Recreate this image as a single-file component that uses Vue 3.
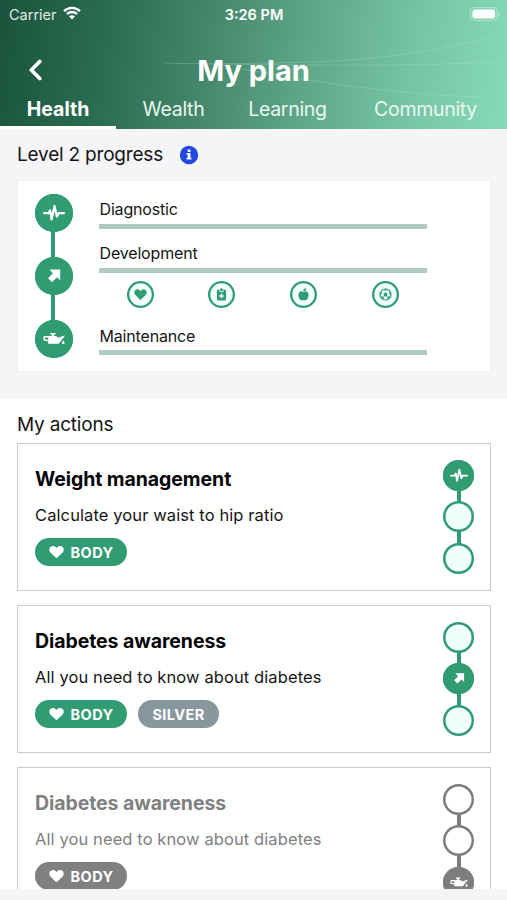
<script setup>
const tabs = ['Health', 'Wealth', 'Learning', 'Community']
const stages = ['pulse', 'arrow', 'oil']
const topics = ['heart', 'clipboard', 'apple', 'ball']
const actions = [
  { title: 'Weight management', text: 'Calculate your waist to hip ratio', tags: ['BODY'], stage: 0, muted: false },
  { title: 'Diabetes awareness', text: 'All you need to know about diabetes', tags: ['BODY', 'SILVER'], stage: 1, muted: false },
  { title: 'Diabetes awareness', text: 'All you need to know about diabetes', tags: ['BODY'], stage: 2, muted: true },
]
</script>

<template>
  <div class="screen">
    <svg class="sprite" aria-hidden="true">
      <symbol id="pulse" viewBox="0 0 22 18">
        <path d="M1.100 9.200h4.600L7.100 6.500l1.500 9L11.500 2l2.400 10.500 1.600-3.300h5.400" fill="none" stroke="currentColor" stroke-width="2.200" stroke-linejoin="round" stroke-linecap="round" />
      </symbol>
      <symbol id="arrow" viewBox="0 0 22 18">
        <path d="M6.500 2.600h10.700v10.700l-3.200-3.100-4.900 5-4-4 4.800-5z" fill="currentColor" />
      </symbol>
      <symbol id="oil" viewBox="0 0 22 18">
        <path d="M7.200 3h5.300v1.400H10.800v1.700h2.300l2.100 1.600 5.900-2.100c.5-.1.700.3.400.7l-5.800 7.400H5.200v-2.500L1.500 10.700C.7 10.400.4 9.900.4 9.200V7.300C.4 6.500 1 6 1.900 6h7V4.400H7.200zM1.900 7.500v1.700l3.300.8V7.500z" fill="currentColor" fill-rule="evenodd" />
        <path d="M20.300 10.500c.9 1.200 1.300 1.900 1.300 2.400a1.300 1.300 0 0 1-2.600 0c0-.5.400-1.200 1.300-2.400z" fill="currentColor" />
      </symbol>
      <symbol id="heart" viewBox="0 0 16 14">
        <path d="M7.300 13.200 1.500 7.400C-.2 5.600 0 3 1.800 1.500 3.500.1 5.800.5 7.200 2L8 2.800 8.800 2c1.400-1.500 3.700-1.900 5.400-.5 1.800 1.500 2 4.100.3 5.900l-5.800 5.800c-.4.400-1 .4-1.400 0z" fill="currentColor" />
      </symbol>
      <symbol id="clipboard" viewBox="0 0 14 14">
        <path d="M3.500 2h1.800a1.700 1.700 0 0 1 3.400 0h1.800c.9 0 1.400.5 1.400 1.300v8.900c0 .8-.5 1.300-1.400 1.300h-7c-.9 0-1.400-.5-1.400-1.300V3.300C2.100 2.500 2.600 2 3.500 2zM4.500 3v1h5V3zM6.200 6v1.700H4.500v1.600h1.700V11h1.600V9.300h1.700V7.700H7.800V6z" fill="currentColor" fill-rule="evenodd" />
      </symbol>
      <symbol id="apple" viewBox="0 0 14 14">
        <path d="M7 4.300C5.500 3.400 3.800 3.300 2.700 4.300.9 5.900 1.300 9.300 2.700 11.600c1.200 2 2.300 2 4.300 1.300 2 .7 3.100.7 4.300-1.300 1.400-2.300 1.800-5.700 0-7.300C10.200 3.300 8.500 3.400 7 4.300zM6.800 3.500C6.600 1.500 7.800.4 10 .4 10 2.500 8.900 3.500 6.800 3.500z" fill="currentColor" />
      </symbol>
      <symbol id="ball" viewBox="0 0 14 14">
        <circle cx="7" cy="7" r="5.900" fill="none" stroke="currentColor" stroke-width="1.300" />
        <path d="m7 4.700 2.300 1.700-.9 2.700H5.600l-.9-2.700zM4.500 1.600 7 3l2.500-1.400L7 .8zM1.100 7.700l2-1.800-.5-2.700L1 5.300zM12.900 7.700l-2-1.800.5-2.700L13 5.300zM3 11.500l2.700-.4-1.200-2.500-2.300 1zM11 11.500l-2.700-.4 1.200-2.500 2.300 1z" fill="currentColor" />
      </symbol>
    </svg>

    <header class="header">
      <svg class="waves" viewBox="0 0 507 129" aria-hidden="true">
        <path d="M164 63C220 65 275 63 335 61C400 57 448 48 490 38" />
        <path d="M210 64C290 65 430 67 507 61" />
        <path d="M242 69C325 83 390 94 480 97" />
      </svg>
      <div class="status">
        <div class="carrier">
          <span>Carrier</span>
          <svg width="18" height="14" viewBox="0 0 18 14">
            <path d="M1 5.200a11.400 11.400 0 0 1 16 0M3.900 8.100a7.300 7.300 0 0 1 10.200 0" fill="none" stroke="#fff" stroke-width="2.300" />
            <path d="m9 13.600-3-3a4.200 4.200 0 0 1 6 0z" fill="#fff" />
          </svg>
        </div>
        <span class="time">3:26 PM</span>
        <svg class="battery" width="30" height="14" viewBox="0 0 30 14">
          <rect x=".6" y=".6" width="26.300" height="12.800" rx="4" fill="none" stroke="#fff" stroke-opacity=".4" />
          <rect x="2.500" y="2.500" width="22.500" height="9" rx="2.300" fill="#fff" />
          <path d="M28.300 5c1.700.5 1.700 3.500 0 4z" fill="#fff" fill-opacity=".5" />
        </svg>
      </div>
      <div class="titlebar">
        <svg class="back" width="16" height="22" viewBox="0 0 16 22">
          <path d="M12.800 2.500 4.300 11l8.500 8.500" fill="none" stroke="#fff" stroke-width="3.700" stroke-linecap="round" stroke-linejoin="round" />
        </svg>
        <h1>My plan</h1>
      </div>
      <nav class="tabs">
        <a v-for="(tab, i) in tabs" :key="tab" class="tab" :class="{ active: i === 0 }"><span>{{ tab }}</span></a>
      </nav>
    </header>

    <section class="progress">
      <div class="heading">
        <h2>Level 2 progress</h2>
        <svg width="20" height="20" viewBox="0 0 20 20">
          <circle cx="10" cy="10" r="9.200" fill="#2348e3" />
          <path d="M8.700 4.600h2.700V7H8.700zM7.600 8.100h3.800v4.700h1v1.700H7.600v-1.700h1.100v-3H7.600z" fill="#fff" />
        </svg>
      </div>
      <div class="panel">
        <div class="steps large">
          <span v-for="s in stages" :key="s" class="step done"><svg class="glyph"><use :href="'#' + s" /></svg></span>
        </div>
        <div class="levels">
          <div class="level"><span>Diagnostic</span><div class="bar"></div></div>
          <div class="level"><span>Development</span><div class="bar"></div></div>
          <div class="topics">
            <span v-for="t in topics" :key="t" class="topic"><svg class="mini"><use :href="'#' + t" /></svg></span>
          </div>
          <div class="level"><span>Maintenance</span><div class="bar"></div></div>
        </div>
      </div>
    </section>

    <section class="actions">
      <h2>My actions</h2>
      <article v-for="(a, i) in actions" :key="i" class="card" :class="{ muted: a.muted }">
        <div class="body">
          <h3>{{ a.title }}</h3>
          <p>{{ a.text }}</p>
          <div class="tags">
            <span v-for="t in a.tags" :key="t" class="tag" :class="t.toLowerCase()">
              <svg v-if="t === 'BODY'" class="heart"><use href="#heart" /></svg>{{ t }}
            </span>
          </div>
        </div>
        <div class="steps">
          <span v-for="(s, n) in stages" :key="s" class="step" :class="{ done: n === a.stage }">
            <svg v-if="n === a.stage" class="glyph"><use :href="'#' + s" /></svg>
          </span>
        </div>
      </article>
    </section>
    <footer class="footer"></footer>
  </div>
</template>

<style>
body {
  margin: 0;
  overflow: hidden;
}
</style>

<style scoped>
* {
  box-sizing: border-box;
}
.screen {
  width: 507px;
  height: 900px;
  overflow: hidden;
  display: flex;
  flex-direction: column;
  background: #fff;
  color: #151515;
  font-family: Inter, sans-serif;
}
.sprite {
  position: absolute;
  width: 0;
  height: 0;
}
h1, h2, h3, p {
  margin: 0;
  white-space: nowrap;
}
svg {
  display: block;
  flex: none;
}
.header {
  position: relative;
  flex: none;
  height: 129px;
  color: #fff;
  background: linear-gradient(98deg, #1a533d 0%, #296b50 20%, #47896d 42%, #60aa8b 62%, #76c4a5 80%, #86dbb9 100%);
}
.waves {
  position: absolute;
  inset: 0;
  width: 507px;
  height: 129px;
  fill: none;
  stroke: #b0efcf;
  stroke-opacity: .25;
}
.status {
  position: relative;
  display: grid;
  grid-template-columns: 1fr auto 1fr;
  align-items: center;
  height: 28px;
  padding: 0 8px 0 9px;
  font-size: 14.500px;
}
.carrier {
  display: flex;
  align-items: center;
  gap: 6px;
  color: #e0ebe6;
}
.carrier svg {
  margin-top: -2px;
}
.time {
  font-weight: 600;
  font-size: 14.500px;
}
.battery {
  justify-self: end;
  margin-right: -1px;
}
.titlebar {
  position: relative;
  display: grid;
  grid-template-columns: 60px 1fr 60px;
  align-items: center;
  height: 84px;
  margin-bottom: -22px;
}
.back {
  margin-left: 27px;
}
h1 {
  padding-top: 1px;
  text-align: center;
  font-size: 29px;
  font-weight: 700;
  line-height: 36px;
}
.tabs {
  position: relative;
  display: grid;
  grid-template-columns: 116px 115px 113px 163px;
  height: 39px;
}
.tab {
  display: flex;
  justify-content: center;
  align-items: center;
  height: 39px;
  padding-bottom: 1px;
  font-size: 19.500px;
  letter-spacing: -.3px;
  color: #e9f6f0;
}
.active {
  font-weight: 700;
  letter-spacing: 0;
  color: #fff;
  border-bottom: 3px solid #fff;
  padding: 2px 0 0;
}
.progress {
  flex: none;
  height: 269.500px;
  padding: 12px 16px 0 17px;
  background: #f5f5f7;
}
.heading {
  display: flex;
  align-items: center;
  gap: 16px;
  height: 27px;
  margin-bottom: 12px;
}
h2 {
  font-size: 19px;
  font-weight: 400;
  letter-spacing: -.2px;
  line-height: 26px;
}
.panel {
  display: flex;
  height: 192px;
  padding: 13px 63px 0 17px;
  background: #fff;
  border: 1px solid #f0f0f1;
}
.steps {
  display: flex;
  flex-direction: column;
  align-items: center;
  flex: none;
  --c: #319c74;
}
.step {
  position: relative;
  display: flex;
  align-items: center;
  justify-content: center;
  width: 31px;
  height: 31px;
  border: 0 solid var(--c);
  box-shadow: inset 0 0 0 2.500px var(--c);
  border-radius: 50%;
  background: #f0fff9;
  color: #fff;
}
.step + .step {
  margin-top: 10.500px;
}
.step + .step::before {
  content: '';
  position: absolute;
  bottom: calc(100% - 1px);
  width: 4px;
  height: 12.500px;
  background: var(--c);
}
.done {
  background: var(--c);
}
.glyph {
  width: 18px;
  height: 15px;
}
.large {
  margin-top: -.5px;
}
.large .step {
  width: 38px;
  height: 38px;
}
.large .step + .step {
  margin-top: 25.400px;
}
.large .step + .step::before {
  left: 16px;
  height: 27.500px;
}
.large .glyph {
  width: 22px;
  height: 18px;
}
.levels {
  flex: 1;
  margin-left: 26px;
}
.level {
  font-size: 16px;
  letter-spacing: -.17px;
  line-height: 20px;
}
.level span {
  display: block;
  padding: 5px 0 0 .5px;
}
.level + .level span {
  padding-top: 14px;
}
.topics + .level span {
  padding-top: 18px;
}
.topics + .level .bar {
  margin-top: 3.500px;
}
.bar {
  height: 5.500px;
  margin-top: 4.500px;
  background: #b0cbc0;
}
.topics {
  display: flex;
  justify-content: space-between;
  padding: 8px 28px 0 27.500px;
}
.topic {
  display: flex;
  align-items: center;
  justify-content: center;
  width: 27px;
  height: 27px;
  box-shadow: inset 0 0 0 2.300px #319c74;
  border-radius: 50%;
  background: #f0fff9;
  color: #319c74;
}
.mini {
  width: 13px;
  height: 13px;
}
.actions {
  flex: 1;
  min-height: 0;
  overflow: hidden;
  padding: 13px 16px 0 17px;
}
.actions h2 {
  margin-bottom: 5px;
}
.card {
  display: flex;
  justify-content: space-between;
  height: 148.500px;
  margin-bottom: 13.500px;
  padding: 16px 16px 0 17px;
  border: 1px solid #cbcbcc;
}
h3 {
  color: #050505;
  font-size: 19.500px;
  font-weight: 700;
  letter-spacing: -.08px;
  line-height: 26px;
  margin-top: 6px;
}
p {
  font-size: 16.500px;
  letter-spacing: .1px;
  line-height: 22px;
  margin-top: 12px;
}
.tags {
  display: flex;
  gap: 11px;
  margin-top: 12.500px;
}
.tag {
  display: flex;
  align-items: center;
  justify-content: center;
  gap: 7px;
  width: 92px;
  height: 28px;
  border-radius: 14px;
  background: #319c74;
  color: #fff;
  font-size: 14.500px;
  font-weight: 700;
  letter-spacing: .4px;
}
.silver {
  width: 81px;
  background: #88979e;
}
.heart {
  width: 15px;
  height: 14px;
}
.muted h3,
.muted p {
  color: #808080;
}
.muted .tag {
  background: #808080;
}
.muted .steps {
  --c: #7d7d7d;
}
.muted .step:not(.done) {
  background: #fff;
}
.footer {
  flex: none;
  height: 11px;
  background: #f5f5f7;
}
</style>
